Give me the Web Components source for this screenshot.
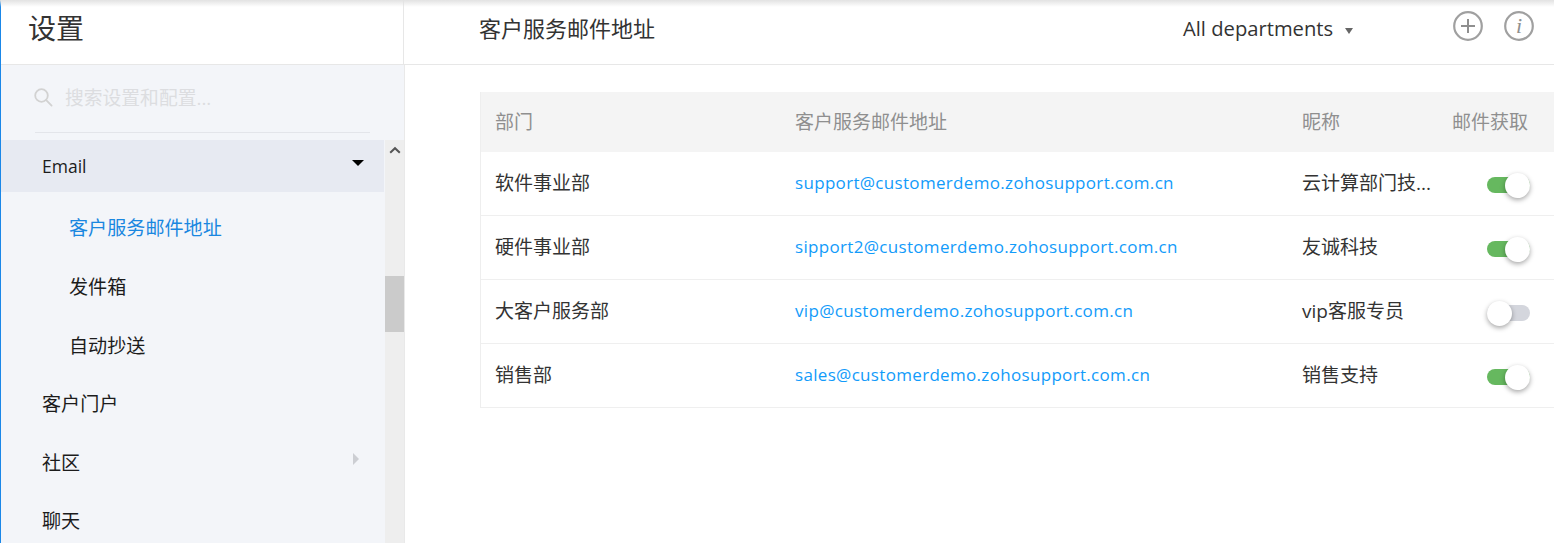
<!DOCTYPE html>
<html lang="zh">
<head>
<meta charset="utf-8">
<title>设置</title>
<style>
html,body{margin:0;padding:0;height:100%;overflow:hidden;background:#fff}
body{font-family:"Open Sans","Noto Sans CJK SC",sans-serif;color:#333}
</style>
</head>
<body>
<settings-app>
  <settings-sidebar slot="side">
    <nav-item open>Email</nav-item>
    <nav-item sub active>客户服务邮件地址</nav-item>
    <nav-item sub>发件箱</nav-item>
    <nav-item sub>自动抄送</nav-item>
    <nav-item>客户门户</nav-item>
    <nav-item more>社区</nav-item>
    <nav-item>聊天</nav-item>
  </settings-sidebar>
  <main-header slot="main"></main-header>
  <mail-table slot="main">
    <mail-row dept="软件事业部" email="support@customerdemo.zohosupport.com.cn" nick="云计算部门技..." on></mail-row>
    <mail-row dept="硬件事业部" email="sipport2@customerdemo.zohosupport.com.cn" nick="友诚科技" on></mail-row>
    <mail-row dept="大客户服务部" email="vip@customerdemo.zohosupport.com.cn" nick="vip客服专员"></mail-row>
    <mail-row dept="销售部" email="sales@customerdemo.zohosupport.com.cn" nick="销售支持" on></mail-row>
  </mail-table>
</settings-app>
<script>
const FONT='"Open Sans","Noto Sans CJK SC",sans-serif';
function define(name,html){
  customElements.define(name,class extends HTMLElement{
    connectedCallback(){
      if(this.shadowRoot)return;
      const r=this.attachShadow({mode:'open'});
      r.innerHTML=typeof html==='function'?html(this):html;
    }
  });
}
define('settings-app',`<style>
:host{display:block;position:relative;height:543px;overflow:hidden;background:#fff;font-family:${FONT}}
.wrap{display:flex;height:100%;border-left:1px solid #1a87e8;box-sizing:border-box}
.side{flex:0 0 403px;display:block;min-width:0}
.main{flex:1;min-width:0;display:block}
.shadow{position:absolute;left:0;right:0;top:0;height:7px;background:linear-gradient(#e2e2e2,rgba(255,255,255,0));pointer-events:none}
</style>
<div class="wrap"><div class="side"><slot name="side"></slot></div><div class="main"><slot name="main"></slot></div></div><div class="shadow"></div>`);

define('settings-sidebar',`<style>
:host{display:flex;flex-direction:column;height:543px;box-sizing:border-box}
header{height:64px;flex:none;box-sizing:border-box;padding-left:27px;padding-bottom:10px;display:flex;align-items:center;font-size:28px;color:#333;background:#fff;border-right:1px solid #e7e7e7}
.body{flex:1;min-height:0;display:flex;flex-direction:column;background:#f3f5f9;border-top:1px solid #e7e7e7;width:404px;box-sizing:border-box;border-right:1px solid #e9e9e9}
.search{height:68px;flex:none;box-sizing:border-box;margin:0 34px 0 34px;display:flex;align-items:center;gap:12px;border-bottom:1px solid #e3e5ea;font-size:18.8px;color:#dcdde0;padding-bottom:3px}
.search svg{flex:none;margin-left:-2px}
.lists{flex:1;min-height:0;margin-top:7px;display:flex;width:403px}
.items{flex:0 0 383px;overflow:hidden}
.bar{flex:0 0 19px;margin-left:1px;background:#eeeeee;display:flex;flex-direction:column;align-items:center}
.up{height:136px;flex:none;width:100%;display:flex;justify-content:center;padding-top:6px;box-sizing:border-box}
.thumb{height:56px;flex:none;width:100%;background:#cbcbcb}
</style>
<header>设置</header>
<div class="body">
  <div class="search">
    <svg width="20" height="20" viewBox="0 0 20 20" fill="none" stroke="#d2d2d2" stroke-width="1.8"><circle cx="8.5" cy="8.5" r="6.3"/><path d="M13.2 13.2 18.6 18.6" stroke-linecap="round"/></svg>
    <span>搜索设置和配置...</span>
  </div>
  <div class="lists">
    <div class="items"><slot></slot></div>
    <div class="bar"><div class="up"><svg width="12" height="8" viewBox="0 0 12 8" fill="none" stroke="#555" stroke-width="2"><path d="M1.2 6.8 6 2.2l4.8 4.6"/></svg></div><div class="thumb"></div></div>
  </div>
</div>`);

define('nav-item',el=>{
  const open=el.hasAttribute('open'),sub=el.hasAttribute('sub'),active=el.hasAttribute('active'),more=el.hasAttribute('more');
  return `<style>
:host{position:relative;box-sizing:border-box;display:flex;align-items:center;
height:${open?'52px':'58.6px'};margin-bottom:${open?'6.2px':'0'};padding-left:${sub?'68px':'41px'};
font-size:${open?'17.5px':'19.1px'};color:${active?'#1a87e0':'#1c1c1c'};background:${open?'#e7eaf2':'transparent'}}
.a{position:absolute;width:0;height:0}
.down{right:20px;top:20px;border-left:6px solid transparent;border-right:6px solid transparent;border-top:6px solid #000}
.r{left:352px;top:20px;border-top:6px solid transparent;border-bottom:6px solid transparent;border-left:6px solid #ccced3}
</style><span><slot></slot></span>${open?'<i class="a down"></i>':''}${more?'<i class="a r"></i>':''}`;
});

define('main-header',`<style>
:host{display:flex;align-items:center;height:65px;box-sizing:border-box;border-bottom:1px solid #e7e7e7;padding-left:75px;position:relative}
h1{margin:0;font-weight:400;font-size:22px;color:#333;flex:0 0 704px;padding-bottom:10px}
.dep{font-size:20.2px;color:#333;flex:none;width:150px;padding-bottom:8px;white-space:nowrap}
.caret{width:0;height:0;border-left:4px solid transparent;border-right:4px solid transparent;border-top:6px solid #666;margin-left:12px;flex:none;margin-bottom:2px}
.icons{display:flex;gap:21px;margin-left:100px;margin-bottom:12px}
svg{display:block}
</style>
<h1>客户服务邮件地址</h1><span class="dep">All departments</span><i class="caret"></i>
<div class="icons">
<svg width="30" height="30" viewBox="0 0 30 30" fill="none" stroke="#a0a0a0"><circle cx="15" cy="15" r="13.8" stroke-width="2.2"/><path d="M15 8v14M8 15h14" stroke-width="2" stroke="#8f8f8f"/></svg>
<svg width="30" height="30" viewBox="0 0 30 30" fill="none" stroke="#a0a0a0"><circle cx="15" cy="15" r="13.8" stroke-width="2.2"/><text x="15" y="22" text-anchor="middle" font-family="Liberation Serif,serif" font-style="italic" font-size="22" fill="#8f8f8f" stroke="none">i</text></svg>
</div>`);

define('mail-table',`<style>
:host{display:block;margin:27px 0 0 76px;box-sizing:border-box;border-left:1px solid #eeeeee}
.head{display:grid;grid-template-columns:299px 507px 150px 1fr;height:60px;align-items:center;background:#f4f4f4;font-size:19px;color:#8f8f8f}
.head span{padding-left:15px;white-space:nowrap;padding-bottom:2px}
.head span:first-child{padding-left:14px}
</style>
<div class="head"><span>部门</span><span>客户服务邮件地址</span><span>昵称</span><span>邮件获取</span></div>
<slot></slot>`);

define('mail-row',el=>`<style>
:host{display:grid;grid-template-columns:299px 507px 150px 1fr;height:64px;align-items:center;box-sizing:border-box;border-bottom:1px solid #efefef;font-size:19px;color:#333}
.c{padding-left:15px;white-space:nowrap;padding-bottom:3px}
.d{padding-left:14px}
.m{color:#129bfa;font-size:17px;letter-spacing:.32px;padding-bottom:2px}
.t{padding-left:50px;padding-bottom:0;padding-top:3px;display:flex}
</style>
<div class="c d">${el.getAttribute('dept')}</div>
<div class="c m">${el.getAttribute('email')}</div>
<div class="c">${el.getAttribute('nick')}</div>
<div class="c t"><toggle-switch ${el.hasAttribute('on')?'on':''}></toggle-switch></div>`);

define('toggle-switch',el=>{const on=el.hasAttribute('on');return `<style>
:host{display:block;position:relative;width:43px;height:16px}
.track{position:absolute;left:0;top:0;right:0;bottom:0;border-radius:9px;background:${on?'#66b85f':'#d4d6dd'}}
.k{position:absolute;top:-4.5px;${on?'right:0':'left:0'};width:25px;height:25px;border-radius:50%;background:#fff;box-shadow:0 2px 5px rgba(0,0,0,.35)}
</style><div class="track"></div><div class="k"></div>`});
</script>
</body>
</html>
